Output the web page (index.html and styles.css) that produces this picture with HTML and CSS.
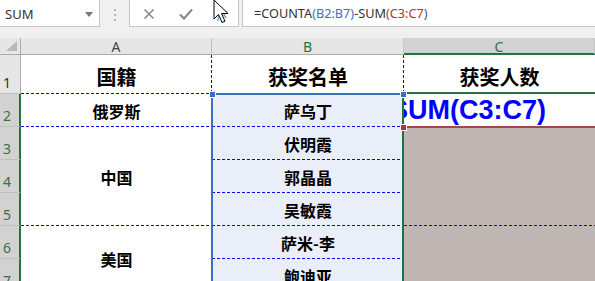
FILE: index.html
```html
<!DOCTYPE html>
<html lang="zh-CN">
<head>
  <meta charset="UTF-8" />
  <title>获奖名单</title>
  <link rel="stylesheet" href="styles.css">
</head>
<body>
  <!-- Formula bar -->
  <div class="toolbar">
    <div class="namebox">
      <span>SUM</span>
      <svg class="caret" width="8" height="5" viewBox="0 0 8 5"><path d="M0 0h8L4 5z" fill="#777"/></svg>
    </div>
    <div class="grip"><i></i><i></i><i></i></div>
    <div class="fx-buttons">
      <svg width="12" height="12" viewBox="0 0 12 12"><path d="M1.5 1.5l9 9M10.5 1.5l-9 9" stroke="#8a8a8a" stroke-width="1.6"/></svg>
      <svg width="14" height="12" viewBox="0 0 14 12"><path d="M1 6.5l4 4L13 1.5" stroke="#8a8a8a" stroke-width="2.2" fill="none"/></svg>
      <span class="fx">fx</span>
    </div>
    <div class="formula">
      =COUNTA<span class="ref-b">(B2:B7)</span>-SUM<span class="ref-c">(C3:C7</span><span class="paren">)</span>
    </div>
    <svg class="cursor" width="18" height="26" viewBox="0 0 18 26">
      <path d="M1 1v19l4.5-4.5 3.5 8 3-1.3-3.5-7.7H15z" fill="#fff" stroke="#000" stroke-width="1"/>
    </svg>
  </div>

  <!-- Sheet -->
  <div class="sheet">
    <div class="corner"><span class="tri"></span></div>
    <div class="colhead">A</div>
    <div class="colhead green-text">B</div>
    <div class="colhead active">C</div>

    <div class="rowhead">1</div>
    <div class="cell title dash-b dash-r">国籍</div>
    <div class="cell title dash-b dash-r">获奖名单</div>
    <div class="cell title">获奖人数</div>

    <div class="rowhead active">2</div>
    <div class="cell dash-b">俄罗斯</div>
    <div class="cell ref dash-b">萨乌丁</div>
    <div class="cell editing"><span>SUM(C3:C7)</span></div>

    <div class="rowhead active">3</div>
    <div class="cell span3 dash-b">中国</div>
    <div class="cell ref dash-b">伏明霞</div>
    <div class="cell filled"></div>

    <div class="rowhead active">4</div>
    <div class="cell ref dash-b">郭晶晶</div>
    <div class="cell filled"></div>

    <div class="rowhead active">5</div>
    <div class="cell ref dash-b">吴敏霞</div>
    <div class="cell filled dash-b"></div>

    <div class="rowhead active">6</div>
    <div class="cell span2">美国</div>
    <div class="cell ref dash-b">萨米-李</div>
    <div class="cell filled"></div>

    <div class="rowhead active">7</div>
    <div class="cell ref">鲍迪亚</div>
    <div class="cell filled"></div>

    <!-- range highlights drawn over the grid -->
    <div class="range-b"></div>
    <div class="range-c"></div>
    <div class="edit-line"></div>
    <span class="handle blue h-left"></span>
    <span class="handle blue h-right"></span>
    <span class="handle red h-red"></span>
  </div>
</body>
</html>
```

FILE: styles.css
```css
body {
  margin: 0;
  background: #f0f0f0;
  font-family: 'Noto Sans', 'DejaVu Sans', sans-serif;
  overflow: hidden;
}

/* Formula bar */
.toolbar {
  position: relative;
  display: flex;
  align-items: flex-start;
  height: 38px;
  background: #f0f0f0;
}

.namebox,
.fx-buttons,
.formula {
  box-sizing: border-box;
  height: 28px;
  margin-top: -1px;
  background: #fff;
  border: 1px solid #c6c6c6;
}

.namebox {
  width: 100px;
  border-left: none;
  display: flex;
  align-items: center;
  justify-content: space-between;
  padding: 1px 6px 0 5px;
  font-size: 13px;
  color: #333;
}

.caret {
  margin-top: 1px;
}

.grip {
  display: flex;
  flex-direction: column;
  gap: 3px;
  margin: 9px 0 0 14px;
}

.grip i {
  width: 2px;
  height: 2px;
  background: #b4b4b4;
}

.fx-buttons {
  width: 110px;
  margin-left: 13px;
  display: flex;
  align-items: center;
  gap: 24px;
  padding: 1px 0 0 13px;
}

.fx {
  font-family: 'Liberation Serif', serif;
  font-style: italic;
  font-size: 14px;
  color: #6f8f8f;
}

.formula {
  flex: 1;
  margin-left: 3px;
  margin-right: -1px;
  padding: 4px 0 0 11px;
  font-size: 12.7px;
  color: #333;
  white-space: nowrap;
}

.ref-b { color: #3e6fc2; }
.ref-c { color: #b8312f; }
.paren { color: #3e4f9a; }

.cursor {
  position: absolute;
  left: 213px;
  top: -1px;
}

/* Sheet */
.sheet {
  position: relative;
  display: grid;
  grid-template-columns: 21px 191px 192px 1fr;
  grid-template-rows: 17px 39px repeat(6, 33px);
  height: 243px;
  background: #fff;
  overflow: hidden;
}

.corner {
  position: relative;
  background: #e6e6e6;
  border-right: 1px solid #ababab;
  border-bottom: 1px solid #ababab;
}

.tri {
  position: absolute;
  right: 3px;
  bottom: 3px;
  width: 0;
  height: 0;
  border-left: 11px solid transparent;
  border-bottom: 10px solid #b9b9b9;
}

.colhead {
  box-sizing: border-box;
  display: flex;
  align-items: center;
  justify-content: center;
  background: #e6e6e6;
  border-bottom: 1px solid #ababab;
  border-right: 1px solid #c8c8c8;
  font-size: 14px;
  color: #444;
  padding-top: 1px;
}

.colhead.green-text {
  color: #217346;
  border-left: 1px solid #9ed2a8;
  margin-left: -1px;
}

.colhead.active {
  background: #d2d2d2;
  border-bottom: 2px solid #217346;
  color: #3e6b48;
}

.rowhead {
  box-sizing: border-box;
  display: flex;
  align-items: flex-end;
  padding: 0 0 1px 3px;
  background: #e6e6e6;
  border-bottom: 1px solid #c0c0c0;
  border-right: 1px solid #ababab;
  font-size: 14px;
  color: #333;
}

.rowhead.active {
  background: #d2d2d2;
  border-right: 2px solid #217346;
  color: #3e6b48;
}

.cell {
  position: relative;
  box-sizing: border-box;
  display: flex;
  align-items: center;
  justify-content: center;
  font-family: 'Noto Sans CJK SC', sans-serif;
  font-weight: 700;
  font-size: 16px;
  color: #000;
}

.cell.title {
  font-size: 20px;
  padding-top: 3px;
}

.span3 { grid-row: span 3; }
.span2 { grid-row: span 2; }

/* Excel style blue dashed borders */
.dash-b::after,
.dash-r::before {
  content: "";
  position: absolute;
}

.dash-b::after {
  left: 0;
  right: 0;
  bottom: 0;
  height: 1px;
  background: repeating-linear-gradient(90deg, #0000ff 0 3px, transparent 3px 5px);
}

.dash-r::before {
  top: 0;
  bottom: 0;
  right: 0;
  width: 1px;
  background: repeating-linear-gradient(180deg, #0000ff 0 3px, transparent 3px 5px);
}

.cell.ref {
  background: #e9eef8;
}

.cell.filled {
  background: #c0b7b5;
}

/* in-cell edit: the formula is scrolled so the S is clipped */
.cell.editing {
  justify-content: flex-start;
  overflow: hidden;
  font-family: 'Liberation Sans', sans-serif;
  font-size: 27px;
  color: #0000ff;
}

.cell.editing span {
  flex: none;
  margin-left: -14px;
  white-space: nowrap;
}

/* Highlights */
.range-b {
  position: absolute;
  box-sizing: border-box;
  left: 211px;
  top: 55px;
  width: 193px;
  height: 220px;
  border: 2px solid #3a6fc4;
}

.range-c {
  position: absolute;
  left: 402px;
  top: 54px;
  right: -4px;
  height: 220px;
  border-left: 2px solid #217346;
  border-top: 2px solid #217346;
}

.edit-line {
  position: absolute;
  left: 404px;
  right: 0;
  top: 88px;
  height: 2px;
  background: #a04a48;
}

.handle {
  position: absolute;
  width: 5px;
  height: 5px;
  border: 1px solid #fff;
}

.handle.blue { background: #3a6fc4; }
.handle.red { background: #a83a3a; }

.h-left { left: 209px; top: 53px; }
.h-right { left: 400px; top: 53px; }
.h-red { left: 400px; top: 86px; }
```
